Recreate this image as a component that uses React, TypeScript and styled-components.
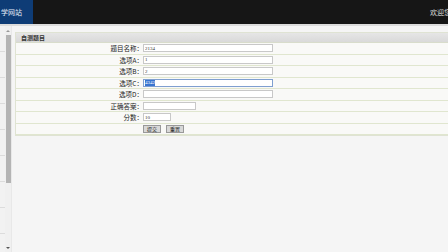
import React from "react";
import styled, { createGlobalStyle } from "styled-components";

const Global = createGlobalStyle`
  html, body { margin: 0; padding: 0; overflow: hidden; background: #f5f5f5; }
  body { font-family: "Noto Sans CJK SC", "Noto Sans", sans-serif; }
`;

const Page = styled.div`
  width: 480px;
  height: 252px;
  display: flex;
  flex-direction: column;
  overflow: hidden;
`;

const Header = styled.header`
  flex-shrink: 0;
  height: 24px;
  background: #161616;
  display: flex;
  align-items: center;
  justify-content: space-between;
  border-bottom: 2px solid #dcdcdc;
`;

const Brand = styled.div`
  width: 33px;
  height: 100%;
  background: #0e3c76;
  color: #e8eef8;
  font-size: 7px;
  display: flex;
  align-items: center;
  padding-left: 1px;
  box-sizing: border-box;
  white-space: nowrap;
  overflow: hidden;
`;

const Welcome = styled.div`
  color: #d8d8d8;
  font-size: 7px;
  width: 50px;
  white-space: nowrap;
`;

const Body = styled.div`
  flex: 1;
  min-height: 0;
  display: flex;
`;

const Sidebar = styled.aside`
  width: 11px;
  background: #f2f2f2;
  display: flex;
  border-right: 1px solid #e8e8e8;
  overflow: hidden;
`;

const SideList = styled.div`
  width: 5px;
  display: flex;
  flex-direction: column;
`;

const SideItem = styled.div`
  height: 25px;
  flex-shrink: 0;
  border-bottom: 1px solid #dcdcdc;
`;

const ScrollTrack = styled.div`
  width: 6px;
  display: flex;
  flex-direction: column;
  align-items: center;
  background: #f0f0f0;
`;

const Arrow = styled.div<{ $down?: boolean }>`
  width: 0;
  height: 0;
  border-left: 2px solid transparent;
  border-right: 2px solid transparent;
  ${(p) => (p.$down ? "border-top: 2px solid #555;" : "border-bottom: 2px solid #999;")}
  margin: 4px 0 3px;
`;

const Thumb = styled.div`
  width: 5px;
  height: 148px;
  flex-shrink: 0;
  background: #b4b4b4;
`;

const Spacer = styled.div`
  flex: 1;
`;

const Main = styled.main`
  flex: 1;
  padding: 6px 0 0 3px;
`;

const Panel = styled.section`
  border: 1px solid #dfe3d3;
  background: #f9f9f7;
`;

const PanelTitle = styled.div`
  height: 9px;
  background: linear-gradient(#e6e6e6, #d9d9d9);
  border-bottom: 1px solid #d8dccb;
  font-size: 6px;
  font-weight: bold;
  color: #333;
  display: flex;
  align-items: center;
  padding-left: 5px;
`;

const Row = styled.div`
  display: flex;
  align-items: center;
  height: 10.5px;
  border-bottom: 1px solid #e0e6cf;
`;

const Label = styled.label`
  width: 127px;
  text-align: right;
  font-size: 6.5px;
  color: #222;
  white-space: nowrap;
`;

const Input = styled.input<{ $w: number }>`
  width: ${(p) => p.$w}px;
  height: 8px;
  box-sizing: border-box;
  border: 1px solid #c8c8c8;
  background: #fff;
  font-size: 5px;
  padding: 0 1px;
  margin: 0;
  font-family: "Liberation Serif", serif;
  color: #333;
  outline: none;
`;

const Selected = styled.span`
  display: inline-flex;
  align-items: center;
  width: 130px;
  height: 8px;
  box-sizing: border-box;
  border: 1px solid #7f9fd0;
  background: #fff;
  padding: 0 1px;
`;

const Sel = styled.span`
  background: #3a76d0;
  color: #fff;
  font-size: 5px;
  font-family: "Liberation Serif", serif;
  line-height: 6px;
`;

const Buttons = styled.div`
  display: flex;
  gap: 5px;
`;

const Btn = styled.button`
  height: 8px;
  padding: 0 3px;
  font-size: 5px;
  border: 1px solid #999;
  background: #d8d8d8;
  color: #222;
  font-family: "Noto Sans CJK SC", sans-serif;
  display: flex;
  align-items: center;
  line-height: 1;
`;

const fields = [
  { label: "题目名称：", value: "2134", w: 130 },
  { label: "选项A：", value: "1", w: 130 },
  { label: "选项B：", value: "2", w: 130 },
];

export default function App() {
  return (
    <Page>
      <Global />
      <Header>
        <Brand>学网站</Brand>
        <Welcome>欢迎您：admin</Welcome>
      </Header>
      <Body>
        <Sidebar>
          <SideList>
            {Array.from({ length: 9 }).map((_, i) => (
              <SideItem key={i} />
            ))}
          </SideList>
          <ScrollTrack>
            <Arrow />
            <Thumb />
            <Spacer />
            <Arrow $down />
          </ScrollTrack>
        </Sidebar>
        <Main>
          <Panel>
            <PanelTitle>自测题目</PanelTitle>
            {fields.map((f) => (
              <Row key={f.label}>
                <Label>{f.label}</Label>
                <Input $w={f.w} defaultValue={f.value} />
              </Row>
            ))}
            <Row>
              <Label>选项C：</Label>
              <Selected>
                <Sel>4342</Sel>
              </Selected>
            </Row>
            <Row>
              <Label>选项D：</Label>
              <Input $w={130} defaultValue="" />
            </Row>
            <Row>
              <Label>正确答案：</Label>
              <Input $w={53} defaultValue="" />
            </Row>
            <Row>
              <Label>分数：</Label>
              <Input $w={28} defaultValue="10" />
            </Row>
            <Row>
              <Label />
              <Buttons>
                <Btn>提交</Btn>
                <Btn>重置</Btn>
              </Buttons>
            </Row>
          </Panel>
        </Main>
      </Body>
    </Page>
  );
}
